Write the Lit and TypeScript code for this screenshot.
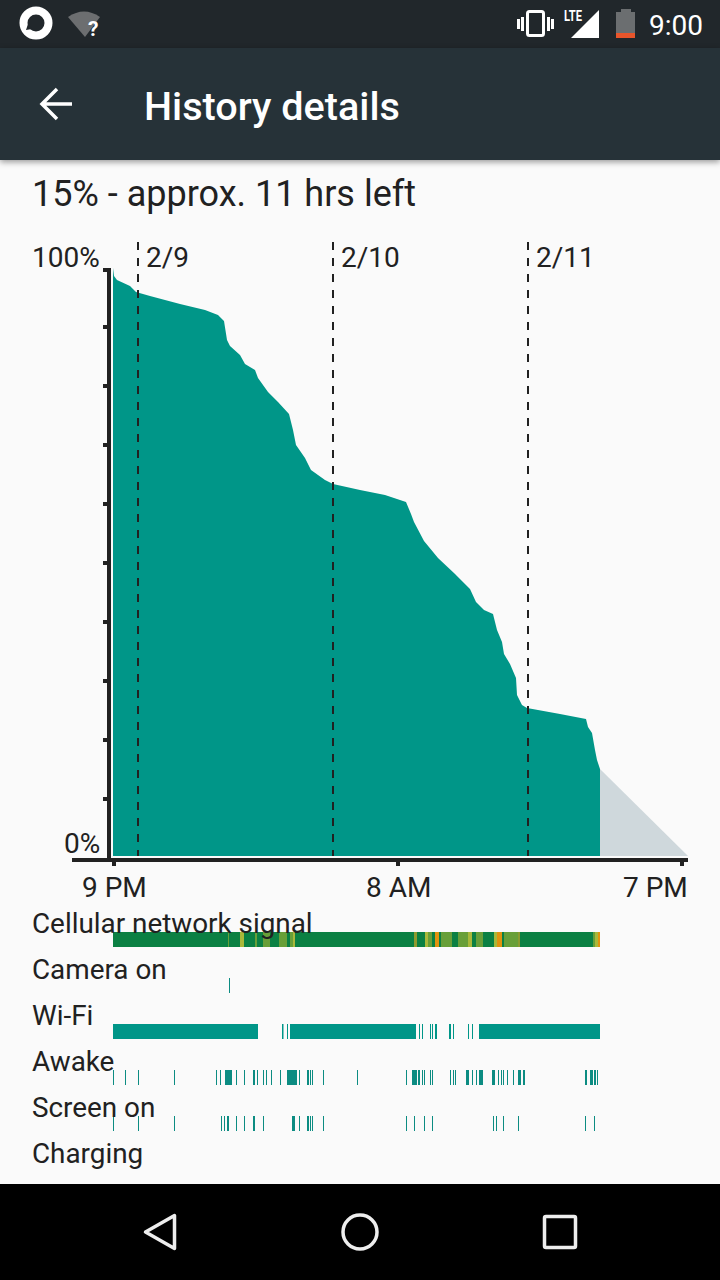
import { html, css, svg, LitElement } from 'lit';
import { customElement } from 'lit/decorators.js';

type Seg = [number, number];
type ColorSeg = [number, number, string];

const BAR_LEFT = 113;
const BAR_WIDTH = 487;
const TEAL = '#009688';
const TICK_TEAL = '#0c8c82';

const CURVE: Seg[] = [
  [113, 268], [114, 276], [117, 280], [130, 286], [136, 292], [150, 296],
  [180, 304], [205, 310], [218, 315], [224, 321], [227, 340], [230, 346],
  [240, 355], [245, 364], [255, 370], [258, 378], [268, 392], [278, 402],
  [289, 414], [293, 430], [296, 445], [305, 458], [311, 470], [325, 480],
  [333, 484], [360, 490], [385, 495], [406, 502], [411, 514], [414, 522],
  [424, 541], [438, 558], [455, 574], [470, 589], [476, 602], [484, 610],
  [493, 614], [497, 630], [502, 642], [504, 654], [510, 664], [516, 678],
  [517, 695], [522, 705], [527, 708], [560, 714], [586, 719], [588, 727],
  [592, 733], [595, 750], [597, 760], [600, 769], [600, 856], [113, 856],
];

const GREEN = '#689f38';
const YELLOW = '#a9b83a';
const ORANGE = '#e0930f';

const CELLULAR: ColorSeg[] = [
  [113, 600, '#0b8043'],
  [228, 229, GREEN], [240, 244, YELLOW], [255, 257, GREEN], [263, 270, GREEN],
  [279, 287, GREEN], [290, 293, GREEN], [293, 295, YELLOW],
  [414, 417, '#8f9a2e'], [425, 428, YELLOW], [428, 432, GREEN], [435, 439, ORANGE],
  [441, 452, GREEN], [458, 461, GREEN], [461, 468, GREEN], [468, 472, YELLOW],
  [476, 483, GREEN], [494, 497, YELLOW], [497, 502, ORANGE], [504, 518, GREEN],
  [518, 520, '#8a9a30'], [593, 595, GREEN], [595, 598, YELLOW], [598, 600, ORANGE],
];

const WIFI: Seg[] = [
  [113, 258], [282, 283.5], [287, 288], [290, 416], [419, 420], [422, 423],
  [430, 431], [432, 433], [435, 437], [449, 451], [453, 454], [468, 469],
  [472, 473], [479, 600],
];

const AWAKE: Seg[] = [
  [113, 114], [125, 126], [138, 139], [174, 175], [216, 217], [220, 221],
  [225, 232], [236, 237], [244, 245], [253, 255], [257, 258], [263, 264],
  [266, 267], [271, 272], [280, 281], [287, 297], [299, 300], [307, 309],
  [310, 311], [312, 313], [323, 324], [357, 358], [406, 407], [412, 417],
  [418, 420], [422, 423], [424, 425], [430, 431], [432, 433], [450, 451],
  [453, 454], [455, 456], [466, 469], [472, 473], [476, 477], [479, 483],
  [492, 495], [498, 499], [501, 502], [503, 504], [507, 508], [513, 514],
  [518, 521], [523, 525], [585, 587], [590, 593], [594, 596], [597, 598],
];

const SCREEN: Seg[] = [
  [113, 114], [138, 139], [174, 175], [221, 222], [224, 225], [227, 229],
  [236, 237], [244, 245], [253, 255], [263, 264], [292, 295], [299, 300],
  [307, 309], [310, 311], [312, 313], [323, 324], [406, 407], [414, 415],
  [424, 425], [432, 433], [493, 494], [496, 497], [503, 504], [518, 519],
  [585, 586], [594, 595],
];

const paint = (segs: Seg[], color: string): ColorSeg[] =>
  segs.map(([a, b]) => [a, b, color] as ColorSeg);

const ROWS: { label: string; segs: ColorSeg[] }[] = [
  { label: 'Cellular network signal', segs: CELLULAR },
  { label: 'Camera on', segs: paint([[229, 230]], TICK_TEAL) },
  { label: 'Wi-Fi', segs: paint(WIFI, TEAL) },
  { label: 'Awake', segs: paint(AWAKE, TICK_TEAL) },
  { label: 'Screen on', segs: paint(SCREEN, TICK_TEAL) },
  { label: 'Charging', segs: [] },
];

@customElement('app-root')
export class AppRoot extends LitElement {
  static styles = css`
    :host {
      display: flex;
      flex-direction: column;
      width: 720px;
      height: 1280px;
      background: #fafafa;
      color: #212121;
      font-family: Roboto, 'Liberation Sans', sans-serif;
      overflow: hidden;
    }

    svg {
      display: block;
    }

    .status-bar {
      height: 48px;
      flex: none;
      display: flex;
      align-items: center;
      justify-content: space-between;
      background: #21272b;
      color: #fff;
    }

    .status-right {
      display: flex;
      align-items: center;
      height: 48px;
    }

    .clock {
      font-size: 28px;
      width: 71px;
      padding-top: 2px;
    }

    .app-bar {
      height: 112px;
      flex: none;
      display: flex;
      align-items: center;
      background: #263238;
      color: #fff;
      box-shadow: 0 2px 6px rgba(0, 0, 0, 0.4);
      position: relative;
      z-index: 1;
    }

    .back {
      width: 144px;
      flex: none;
    }

    .app-bar h1 {
      margin: 0;
      padding-top: 5px;
      font-size: 39.6px;
      font-weight: 500;
    }

    main {
      flex: 1;
      display: flex;
      flex-direction: column;
      min-height: 0;
    }

    .summary {
      height: 65px;
      flex: none;
      padding-left: 32px;
      font-size: 36px;
      line-height: 68px;
    }

    .chart {
      flex: none;
      margin-bottom: -8px;
    }

    .chart text {
      font-size: 28px;
      fill: #212121;
    }

    .row {
      position: relative;
      height: 46px;
    }

    .row span {
      display: block;
      position: relative;
      z-index: 1;
      padding-left: 32px;
      font-size: 27.85px;
      line-height: 48px;
    }

    .bar {
      position: absolute;
      left: 113px;
      top: 32px;
    }

    .nav {
      height: 96px;
      flex: none;
      background: #000;
    }
  `;

  private renderBar(segs: ColorSeg[]) {
    if (!segs.length) return null;
    return html`<svg class="bar" width=${BAR_WIDTH} height="15">
      ${segs.map(
        ([a, b, color]) =>
          svg`<rect x=${a - BAR_LEFT} y="0" width=${b - a} height="15" fill=${color}></rect>`,
      )}
    </svg>`;
  }

  private renderChart() {
    const points = CURVE.map(p => p.join(',')).join(' ');
    const ticks = [327, 386, 445, 504, 563, 622, 681, 740, 799];
    return html`<svg class="chart" width="720" height="683" viewBox="0 225 720 683">
      <polygon points="600,769 688,856 600,856" fill="#cfd8dc"></polygon>
      <polygon points=${points} fill=${TEAL}></polygon>

      ${[138, 333, 528].map(
        x => svg`<line x1=${x} x2=${x} y1="242" y2="856" stroke="#212121" stroke-width="2" stroke-dasharray="8 8"></line>`,
      )}

      <rect x="107" y="268" width="4" height="594" fill="#212121"></rect>
      <rect x="103" y="268" width="8" height="4" fill="#212121"></rect>
      ${ticks.map(
        y => svg`<rect x="103" y=${y - 2} width="6" height="4" fill="#212121"></rect>`,
      )}
      <rect x="72" y="858" width="616" height="4" fill="#212121"></rect>
      ${[112, 396, 680].map(
        x => svg`<rect x=${x} y="860" width="4" height="6" fill="#212121"></rect>`,
      )}

      <text x="32" y="267">100%</text>
      <text x="64" y="853">0%</text>
      <text x="146" y="267">2/9</text>
      <text x="341" y="267">2/10</text>
      <text x="536" y="267">2/11</text>
      <text x="82" y="897">9 PM</text>
      <text x="366" y="897">8 AM</text>
      <text x="623" y="897">7 PM</text>
    </svg>`;
  }

  render() {
    return html`
      <div class="status-bar">
        <svg width="120" height="48">
          <circle cx="36" cy="23" r="12.5" fill="none" stroke="#fff" stroke-width="8"></circle>
          <path d="M28 24 L26 30 L32 29 Z" fill="#21272b"></path>
          <path d="M68 17 Q84 6 100 17 L85 37 Z" fill="#6c6e70"></path>
          <text x="88" y="36" font-size="21" font-weight="700" fill="#fff" font-family="Roboto, sans-serif">?</text>
        </svg>
        <div class="status-right">
          <svg width="140" height="48">
            <g fill="#fff">
              <rect x="8" y="19" width="3" height="10"></rect>
              <rect x="12" y="17" width="3" height="14"></rect>
              <rect x="38" y="17" width="3" height="14"></rect>
              <rect x="42" y="19" width="3" height="10"></rect>
            </g>
            <rect x="18.5" y="11.5" width="16" height="24" rx="2" fill="none" stroke="#fff" stroke-width="3"></rect>
            <text x="55" y="21" font-size="15" font-weight="700" fill="#fff" textLength="18" lengthAdjust="spacingAndGlyphs" font-family="Roboto, sans-serif">LTE</text>
            <path d="M90 10 V38 H62 Z" fill="#fff"></path>
            <rect x="112" y="9" width="10" height="4" fill="#6b6e70"></rect>
            <rect x="107" y="12" width="19" height="21" fill="#6b6e70"></rect>
            <rect x="107" y="33" width="19" height="5" fill="#e8552b"></rect>
          </svg>
          <div class="clock">9:00</div>
        </div>
      </div>

      <header class="app-bar">
        <div class="back">
          <svg width="144" height="40" viewBox="0 0 144 40">
            <path d="M72 20 H43 M57 5 L42 20 L57 35" fill="none" stroke="#fff" stroke-width="3.5"></path>
          </svg>
        </div>
        <h1>History details</h1>
      </header>

      <main>
        <div class="summary">15% - approx. 11 hrs left</div>
        ${this.renderChart()}
        ${ROWS.map(
          row => html`<div class="row">
            ${this.renderBar(row.segs)}
            <span>${row.label}</span>
          </div>`,
        )}
      </main>

      <footer class="nav">
        <svg width="720" height="96" viewBox="0 1184 720 96">
          <g fill="none" stroke="#eee" stroke-width="3.5" stroke-linejoin="round">
            <path d="M145.5 1232 L174.5 1215.5 V1248.5 Z"></path>
            <circle cx="360" cy="1232" r="17"></circle>
            <rect x="544.5" y="1216.5" width="31" height="31" rx="1.5"></rect>
          </g>
        </svg>
      </footer>
    `;
  }
}
